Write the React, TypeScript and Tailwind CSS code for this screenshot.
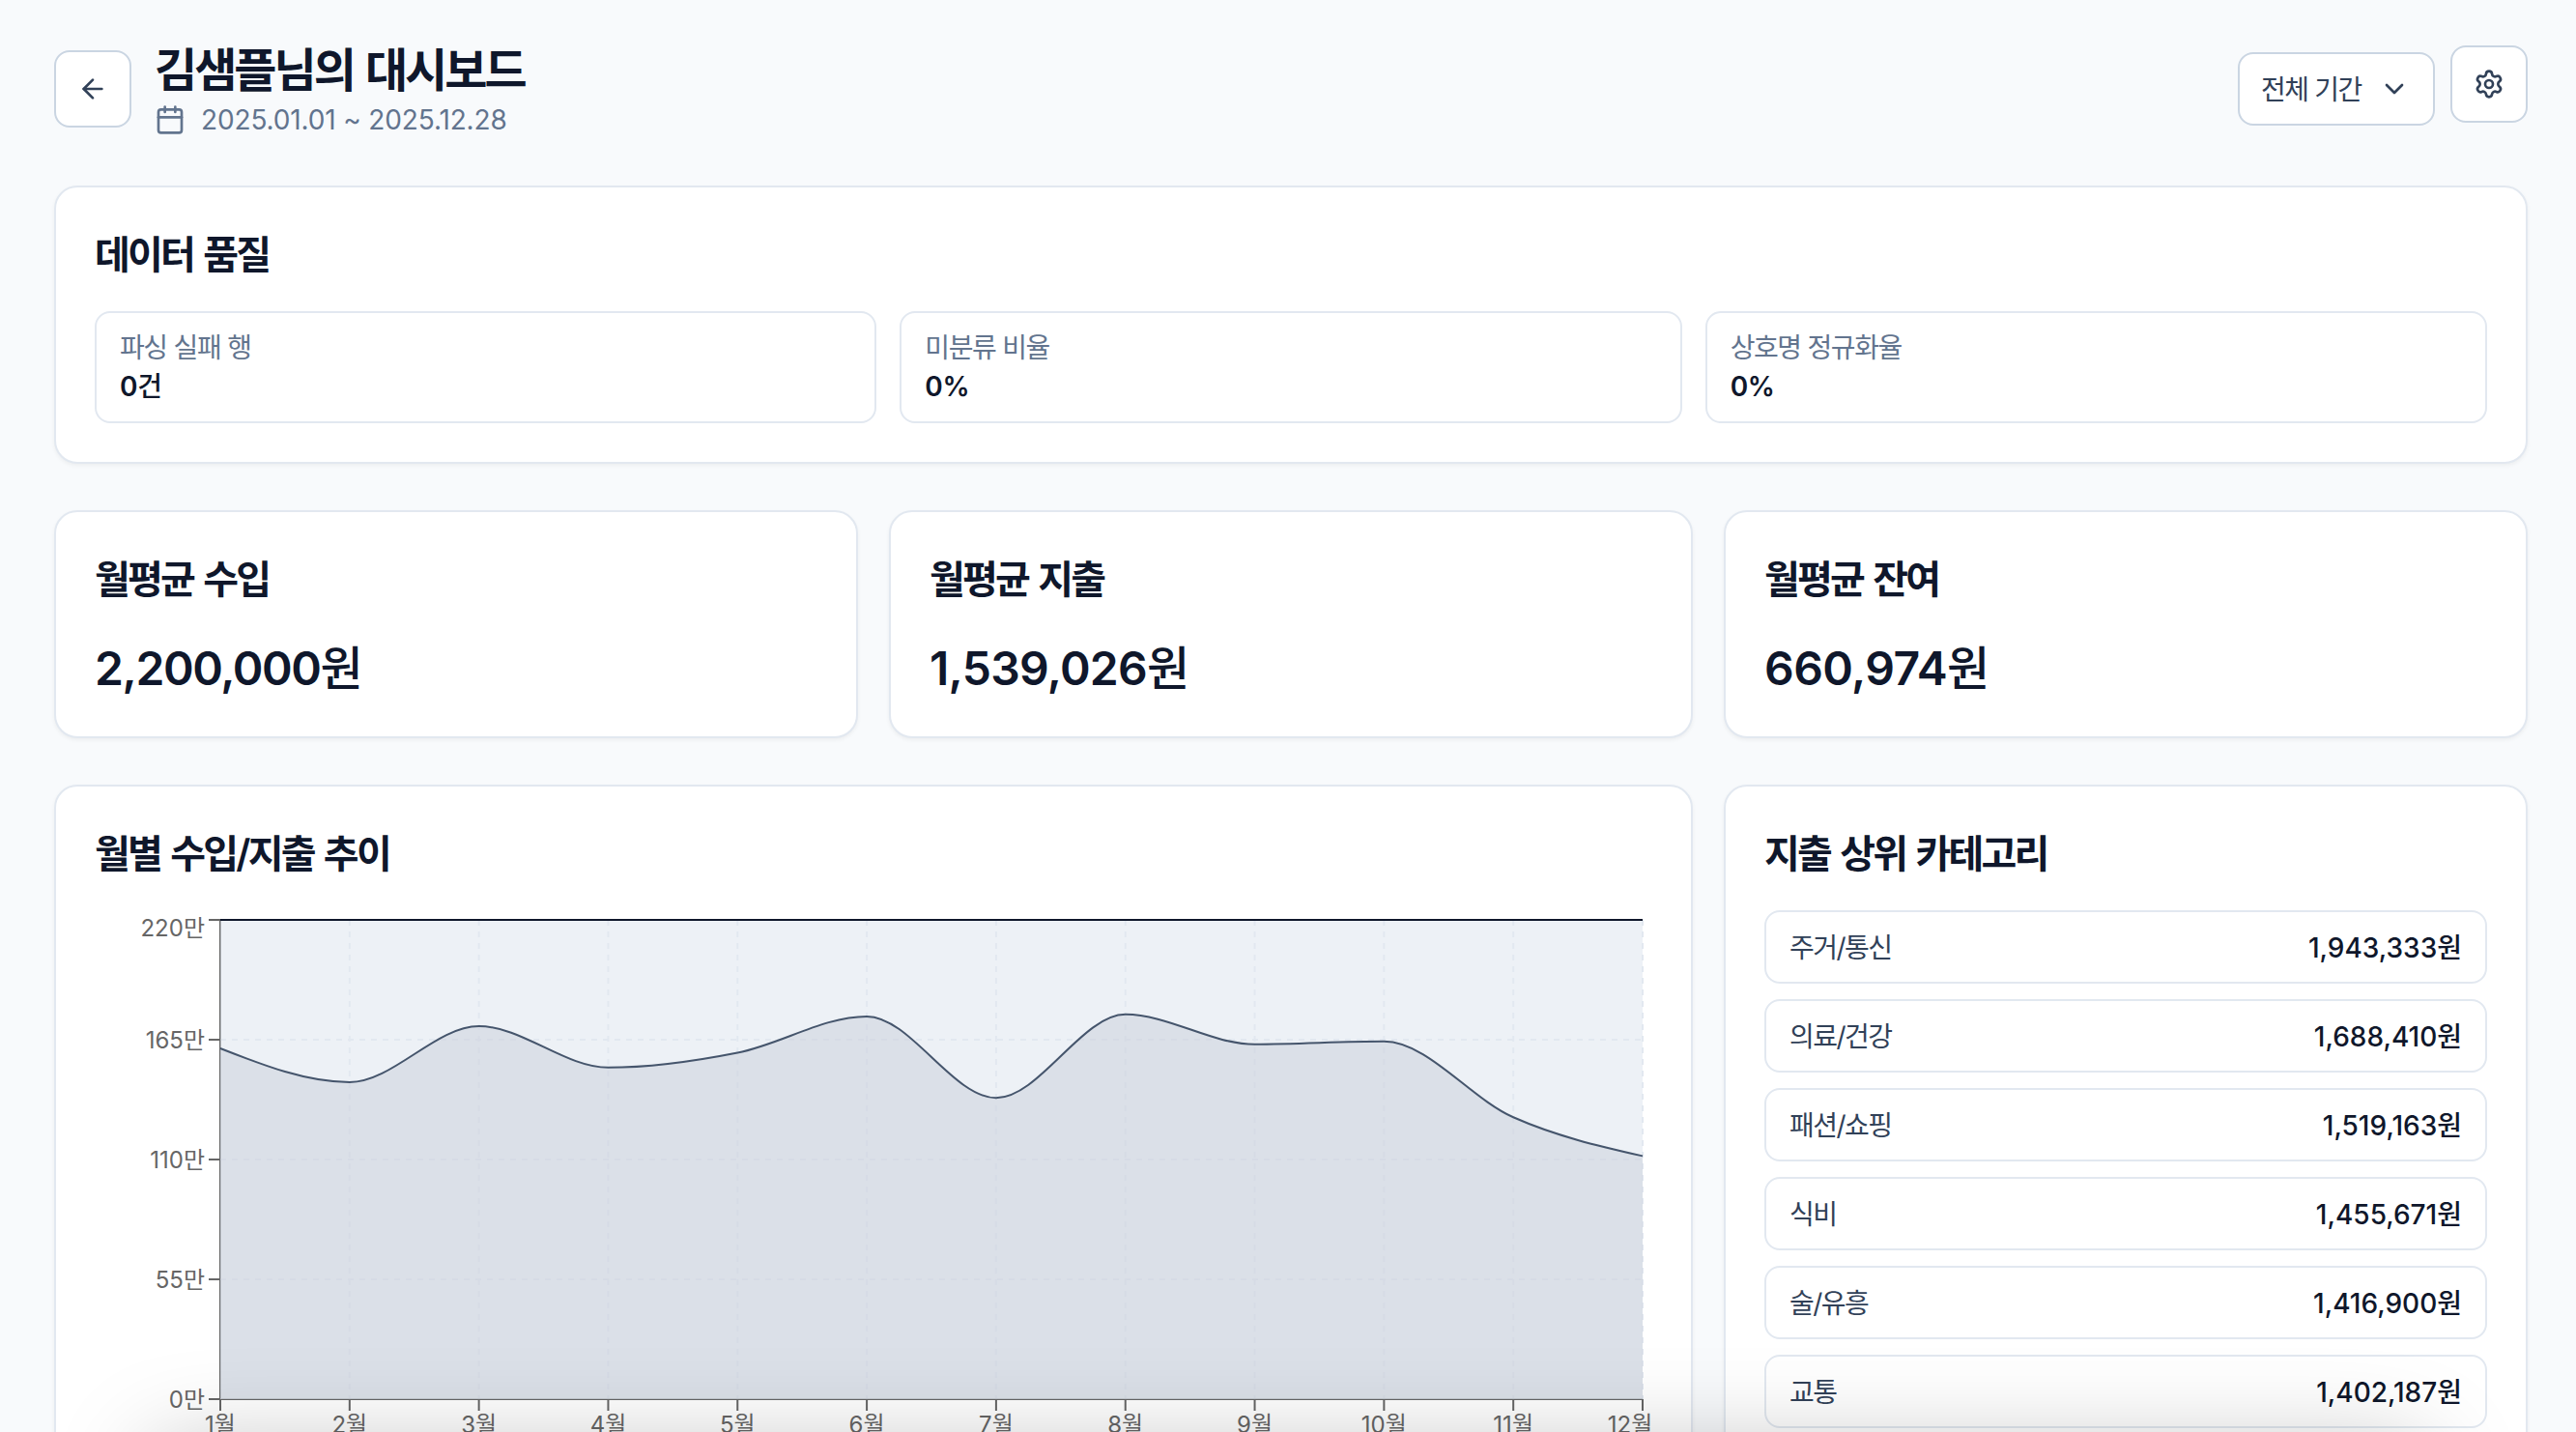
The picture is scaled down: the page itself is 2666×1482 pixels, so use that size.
import * as React from 'react';
import { ArrowLeft, Calendar, ChevronDown, Settings } from 'lucide-react';
import clsx from 'clsx';

const QUALITY = [
  { label: '파싱 실패 행', value: '0', unit: '건' },
  { label: '미분류 비율', value: '0', unit: '%' },
  { label: '상호명 정규화율', value: '0', unit: '%' },
];

const SUMMARY = [
  { title: '월평균 수입', amount: 2200000, tracking: 'tracking-[-0.029em]' },
  { title: '월평균 지출', amount: 1539026, tracking: 'tracking-[-0.015em]' },
  { title: '월평균 잔여', amount: 660974, tracking: 'tracking-[-0.012em]' },
];

const CATEGORIES = [
  { name: '주거/통신', amount: 1943333 },
  { name: '의료/건강', amount: 1688410 },
  { name: '패션/쇼핑', amount: 1519163 },
  { name: '식비', amount: 1455671 },
  { name: '술/유흥', amount: 1416900 },
  { name: '교통', amount: 1402187 },
];

// 만원 단위
const INCOME = 220;
const EXPENSES = [161, 145.5, 171.2, 152.2, 159, 175.7, 138.3, 176.6, 162.9, 164.2, 129.4, 111.6];
const Y_TICKS = [220, 165, 110, 55, 0];

const PLOT = { left: 130, right: 1602, top: 10, bottom: 506 };

const xAt = (i: number) => PLOT.left + ((PLOT.right - PLOT.left) * i) / (EXPENSES.length - 1);
const yAt = (v: number) => PLOT.bottom - ((PLOT.bottom - PLOT.top) * v) / INCOME;

// Monotone cubic interpolation, same curve as d3's curveMonotoneX
function monotonePath(pts: [number, number][]) {
  const n = pts.length;
  const slope = (i: number) => (pts[i + 1][1] - pts[i][1]) / (pts[i + 1][0] - pts[i][0]);
  const tangents = pts.map((_, i) => {
    if (i === 0 || i === n - 1) return 0;
    const s0 = slope(i - 1);
    const s1 = slope(i);
    const p = (s0 + s1) / 2;
    return (Math.sign(s0) + Math.sign(s1)) * Math.min(Math.abs(s0), Math.abs(s1), 0.5 * Math.abs(p)) || 0;
  });
  tangents[0] = (3 * slope(0) - tangents[1]) / 2;
  tangents[n - 1] = (3 * slope(n - 2) - tangents[n - 2]) / 2;

  let d = `M${pts[0][0]},${pts[0][1]}`;
  for (let i = 0; i < n - 1; i++) {
    const [x0, y0] = pts[i];
    const [x1, y1] = pts[i + 1];
    const dx = (x1 - x0) / 3;
    d += `C${x0 + dx},${y0 + dx * tangents[i]},${x1 - dx},${y1 - dx * tangents[i + 1]},${x1},${y1}`;
  }
  return d;
}

function Card({ className, children }: { className?: string; children: React.ReactNode }) {
  return (
    <section
      className={clsx(
        'rounded-3xl border-2 border-slate-200 bg-white p-10 shadow-[0_2px_4px_rgba(0,0,0,0.05)]',
        className
      )}
    >
      {children}
    </section>
  );
}

function CardTitle({ children }: { children: React.ReactNode }) {
  return (
    <h2 className="pt-[3px] text-[40px] leading-[53px] font-semibold tracking-[-0.069em] text-slate-900 [word-spacing:0.07em]">
      {children}
    </h2>
  );
}

function Won({ amount, unitClassName }: { amount: number; unitClassName?: string }) {
  return (
    <>
      {amount.toLocaleString('en-US')}
      <span className={unitClassName}>원</span>
    </>
  );
}

function TrendChart() {
  const line = monotonePath(EXPENSES.map((v, i) => [xAt(i), yAt(v)]));

  return (
    <svg width="1612" height="576" viewBox="0 0 1612 576" className="mt-8 block">
      {/* Grid */}
      <g className="stroke-slate-200" strokeWidth="2" strokeDasharray="6 6">
        {Y_TICKS.map((v) => (
          <line key={v} x1={PLOT.left} x2={PLOT.right} y1={yAt(v)} y2={yAt(v)} />
        ))}
        {EXPENSES.map((_, i) => (
          <line key={i} x1={xAt(i)} x2={xAt(i)} y1={PLOT.top} y2={PLOT.bottom} />
        ))}
      </g>

      {/* Axes */}
      <g stroke="#666" strokeWidth="2">
        <line x1={PLOT.left} x2={PLOT.left} y1={PLOT.top} y2={PLOT.bottom} />
        <line x1={PLOT.left} x2={PLOT.right} y1={PLOT.bottom} y2={PLOT.bottom} />
        {Y_TICKS.map((v) => (
          <line key={v} x1={PLOT.left - 12} x2={PLOT.left} y1={yAt(v)} y2={yAt(v)} />
        ))}
        {EXPENSES.map((_, i) => (
          <line key={i} x1={xAt(i)} x2={xAt(i)} y1={PLOT.bottom} y2={PLOT.bottom + 12} />
        ))}
      </g>

      <g className="fill-[#666] text-[24px]">
        {Y_TICKS.map((v) => (
          <text key={v} x={PLOT.left - 16} y={Math.max(yAt(v), 18) + 9} textAnchor="end">
            {v}만
          </text>
        ))}
        {EXPENSES.map((_, i) => (
          <text
            key={i}
            x={i === EXPENSES.length - 1 ? xAt(i) - 13 : xAt(i)}
            y={PLOT.bottom + 35}
            textAnchor="middle"
          >
            {i + 1}월
          </text>
        ))}
      </g>

      {/* Income */}
      <rect
        x={PLOT.left}
        y={PLOT.top}
        width={PLOT.right - PLOT.left}
        height={PLOT.bottom - PLOT.top}
        fill="#e2e8f0"
        fillOpacity="0.62"
      />
      <line x1={PLOT.left} x2={PLOT.right} y1={PLOT.top} y2={PLOT.top} className="stroke-slate-900" strokeWidth="2" />

      {/* Expense */}
      <path d={`${line}V${PLOT.bottom}H${PLOT.left}Z`} fill="#cbd0dc" fillOpacity="0.54" />
      <path d={line} fill="none" className="stroke-slate-600" strokeWidth="2" />
    </svg>
  );
}

export default function App() {
  return (
    <div className="relative h-screen overflow-hidden bg-slate-50 px-14 pt-10 pr-[50px] font-[Inter,'Noto_Sans_CJK_KR',sans-serif] text-[28px] leading-10 text-slate-900">
      <div className="flex w-[2560px] flex-col gap-12">
        <header className="flex items-center justify-between">
          <div className="flex items-center gap-6">
            <button className="flex size-20 items-center justify-center rounded-2xl border-2 border-slate-300 bg-white text-slate-700">
              <ArrowLeft size={32} />
            </button>
            <div>
              <h1 className="pt-0.5 text-[48px] leading-[62px] font-semibold tracking-[-0.062em] [word-spacing:0.06em]">
                김샘플님의 대시보드
              </h1>
              <p className="flex items-center gap-4 tracking-[-0.005em] text-slate-500">
                <Calendar size={32} />
                2025.01.01 ~ 2025.12.28
              </p>
            </div>
          </div>

          <div className="flex items-center gap-4">
            <button className="flex h-[76px] w-[204px] items-center justify-between rounded-2xl border-2 border-slate-300 bg-white px-[22px] pr-6 text-slate-700">
              <span className="pt-px tracking-[-0.05em] whitespace-nowrap">전체 기간</span>
              <ChevronDown size={32} className="shrink-0" />
            </button>
            <button className="mb-2.5 flex size-20 items-center justify-center rounded-2xl border-2 border-slate-300 bg-white text-slate-700">
              <Settings size={32} />
            </button>
          </div>
        </header>

        <Card>
          <CardTitle>데이터 품질</CardTitle>
          <div className="mt-8 grid grid-cols-3 gap-6">
            {QUALITY.map((q) => (
              <div key={q.label} className="rounded-2xl border-2 border-slate-200 px-6 py-4">
                <p className="pt-px leading-[39px] tracking-[-0.052em] text-slate-500 [word-spacing:0.02em]">
                  {q.label}
                </p>
                <p className="pt-px leading-[39px] font-semibold tracking-[-0.01em]">
                  {q.value}
                  <span className={clsx(q.unit === '건' && 'font-medium')}>{q.unit}</span>
                </p>
              </div>
            ))}
          </div>
        </Card>

        <div className="grid grid-cols-3 gap-8">
          {SUMMARY.map((s) => (
            <Card key={s.title}>
              <CardTitle>{s.title}</CardTitle>
              <p className={clsx('mt-8 pt-[3px] text-[48px] leading-[61px] font-semibold', s.tracking)}>
                <Won amount={s.amount} unitClassName="font-medium" />
              </p>
            </Card>
          ))}
        </div>

        <div className="grid grid-cols-3 gap-8">
          <Card className="col-span-2">
            <CardTitle>월별 수입/지출 추이</CardTitle>
            <TrendChart />
          </Card>

          <Card>
            <CardTitle>지출 상위 카테고리</CardTitle>
            <ul className="mt-8 flex flex-col gap-4">
              {CATEGORIES.map((c) => (
                <li
                  key={c.name}
                  className="flex h-[76px] items-center justify-between rounded-2xl border-2 border-slate-200 px-6 pt-px"
                >
                  <span className="tracking-[-0.055em] text-slate-700">{c.name}</span>
                  <span className="font-medium">
                    <Won amount={c.amount} />
                  </span>
                </li>
              ))}
            </ul>
          </Card>
        </div>
      </div>

      <div className="pointer-events-none absolute inset-x-[156px] top-[1500px] h-40 rounded-3xl shadow-[0_0_100px_rgba(0,0,0,0.25)]" />
    </div>
  );
}
